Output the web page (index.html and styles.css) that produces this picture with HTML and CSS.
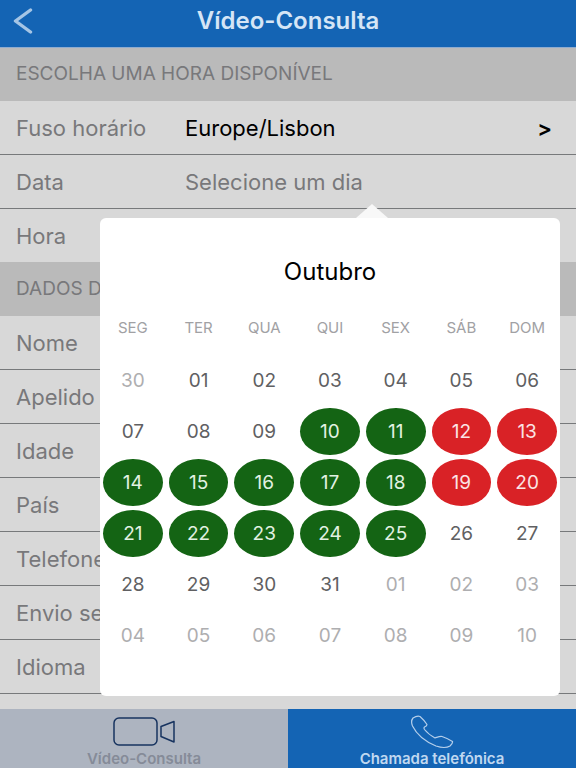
FILE: index.html
```html
<!DOCTYPE html>
<html lang="pt">

<head>
    <meta charset="UTF-8">
    <meta name="viewport" content="width=device-width, initial-scale=1.0">
    <title>Vídeo-Consulta</title>
    <link rel="stylesheet" href="styles.css">
</head>

<body>
    <header class="topbar">
        <button type="button" class="back" aria-label="Voltar">
            <svg width="20" height="26" viewBox="0 0 20 26" fill="none" stroke="currentColor" stroke-width="3.400" stroke-linecap="round" stroke-linejoin="round">
                <path d="M17.500 2L2.500 13L17.500 24" />
            </svg>
        </button>
        <h1>Vídeo-Consulta</h1>
    </header>

    <main>
        <form class="booking">
            <h2 class="section-title">ESCOLHA UMA HORA DISPONÍVEL</h2>
            <div class="row">
                <label for="timezone">Fuso horário</label>
                <button type="button" id="timezone" class="picker"><span>Europe/Lisbon</span><span class="arrow">&gt;</span></button>
            </div>
            <div class="row">
                <label for="date">Data</label>
                <input type="text" id="date" placeholder="Selecione um dia" readonly>
            </div>
            <div class="row">
                <label for="time">Hora</label>
                <input type="text" id="time" readonly>
            </div>

            <h2 class="section-title">DADOS DO PACIENTE</h2>
            <div class="row">
                <label for="name">Nome</label>
                <input type="text" id="name">
            </div>
            <div class="row">
                <label for="surname">Apelido</label>
                <input type="text" id="surname">
            </div>
            <div class="row">
                <label for="age">Idade</label>
                <input type="text" id="age">
            </div>
            <div class="row">
                <label for="country">País</label>
                <input type="text" id="country">
            </div>
            <div class="row">
                <label for="phone">Telefone</label>
                <input type="tel" id="phone">
            </div>
            <div class="row">
                <label for="secure">Envio seguro</label>
                <input type="text" id="secure">
            </div>
            <div class="row">
                <label for="language">Idioma</label>
                <input type="text" id="language">
            </div>
        </form>

        <!-- Date popover -->
        <section class="calendar" aria-label="Calendário">
            <h2>Outubro</h2>
            <table>
                <thead>
                    <tr><th>SEG</th><th>TER</th><th>QUA</th><th>QUI</th><th>SEX</th><th>SÁB</th><th>DOM</th></tr>
                </thead>
                <tbody>
                    <tr>
                        <td><button type="button" class="day other">30</button></td>
                        <td><button type="button" class="day">01</button></td>
                        <td><button type="button" class="day">02</button></td>
                        <td><button type="button" class="day">03</button></td>
                        <td><button type="button" class="day">04</button></td>
                        <td><button type="button" class="day">05</button></td>
                        <td><button type="button" class="day">06</button></td>
                    </tr>
                    <tr>
                        <td><button type="button" class="day">07</button></td>
                        <td><button type="button" class="day">08</button></td>
                        <td><button type="button" class="day">09</button></td>
                        <td><button type="button" class="day free">10</button></td>
                        <td><button type="button" class="day free">11</button></td>
                        <td><button type="button" class="day busy">12</button></td>
                        <td><button type="button" class="day busy">13</button></td>
                    </tr>
                    <tr>
                        <td><button type="button" class="day free">14</button></td>
                        <td><button type="button" class="day free">15</button></td>
                        <td><button type="button" class="day free">16</button></td>
                        <td><button type="button" class="day free">17</button></td>
                        <td><button type="button" class="day free">18</button></td>
                        <td><button type="button" class="day busy">19</button></td>
                        <td><button type="button" class="day busy">20</button></td>
                    </tr>
                    <tr>
                        <td><button type="button" class="day free">21</button></td>
                        <td><button type="button" class="day free">22</button></td>
                        <td><button type="button" class="day free">23</button></td>
                        <td><button type="button" class="day free">24</button></td>
                        <td><button type="button" class="day free">25</button></td>
                        <td><button type="button" class="day">26</button></td>
                        <td><button type="button" class="day">27</button></td>
                    </tr>
                    <tr>
                        <td><button type="button" class="day">28</button></td>
                        <td><button type="button" class="day">29</button></td>
                        <td><button type="button" class="day">30</button></td>
                        <td><button type="button" class="day">31</button></td>
                        <td><button type="button" class="day other">01</button></td>
                        <td><button type="button" class="day other">02</button></td>
                        <td><button type="button" class="day other">03</button></td>
                    </tr>
                    <tr>
                        <td><button type="button" class="day other">04</button></td>
                        <td><button type="button" class="day other">05</button></td>
                        <td><button type="button" class="day other">06</button></td>
                        <td><button type="button" class="day other">07</button></td>
                        <td><button type="button" class="day other">08</button></td>
                        <td><button type="button" class="day other">09</button></td>
                        <td><button type="button" class="day other">10</button></td>
                    </tr>
                </tbody>
            </table>
        </section>
    </main>

    <nav class="tabs">
        <button type="button" class="tab">
            <svg width="64" height="34" viewBox="0 0 64 34" fill="none" stroke="#17335f" stroke-width="1.500" stroke-linejoin="round">
                <rect x="2" y="3" width="43" height="27" rx="5" />
                <path d="M49 11.500L62 6.500V27L49 21.500Z" />
            </svg>
            <span>Vídeo-Consulta</span>
        </button>
        <button type="button" class="tab active">
            <svg width="44" height="34" viewBox="0 0 44 34" fill="none" stroke="#b5cfeb" stroke-width="1.200" stroke-linejoin="round">
                <path d="M3 3Q7 .5 10 1.500Q14 5 17 9.500Q17 11 14.500 12Q13.500 13 14.500 14.500Q18 19 25 23C28 22 30 21 32 21.500Q38 23.500 42.500 26.500Q43 28 40 31Q35 34 26 31Q9 24 2.500 11Q.5 6 3 3Z" />
            </svg>
            <span>Chamada telefónica</span>
        </button>
    </nav>
</body>

</html>
```
FILE: styles.css
```css
/* General Reset */
* {
    margin: 0;
    padding: 0;
    box-sizing: border-box;
}

body {
    display: flex;
    flex-direction: column;
    min-height: 100vh;
    font-family: Inter, "Liberation Sans", sans-serif;
    font-size: 22px;
    line-height: 24px;
    color: #78787b;
    background-color: #d8d8d8;
}

button, input {
    font: inherit;
    color: inherit;
    background: none;
    border: none;
}

button {
    cursor: pointer;
}

/* Top bar */
.topbar {
    display: grid;
    grid-template-columns: 48px 1fr 48px;
    align-items: center;
    height: 48px;
    padding-bottom: 5px;
    color: #d5e5f6;
    background: #1464b4;
    border-bottom: 1px solid #8facd0;
}

.topbar h1 {
    font-size: 24px;
    font-weight: 600;
    text-align: center;
}

.back {
    display: flex;
    padding-left: 13px;
    color: #a5c5e5;
}

/* Form */
main {
    position: relative;
    flex: 1;
    padding-bottom: 15px;
}

.section-title {
    padding: 14px 16px 15px;
    font-size: 19px;
    font-weight: 400;
    background: #bababa;
}

.row {
    display: grid;
    grid-template-columns: 153px 1fr;
    column-gap: 16px;
    align-items: center;
    height: 54px;
    padding: 0 24px 0 16px;
    border-bottom: 1px solid #77797b;
}

.row:has(+ .section-title) {
    border-bottom-color: #bababa;
}

.row label {
    white-space: nowrap;
}

.row input {
    width: 100%;
    outline: none;
}

.row input::placeholder {
    color: #78787b;
    opacity: 1;
}

.picker {
    display: flex;
    justify-content: space-between;
    color: #000;
}

.arrow {
    font-weight: 600;
}

/* Calendar popover */
.calendar {
    position: absolute;
    top: 170px;
    left: 100px;
    right: 16px;
    padding: 42px 0 35px;
    background: #fff;
    border-radius: 6px;
}

.calendar::before {
    content: "";
    position: absolute;
    top: -14px;
    left: 256px;
    border: 16px solid transparent;
    border-top: none;
    border-bottom: 14px solid #f8f8f8;
}

.calendar h2 {
    font-size: 24px;
    font-weight: 400;
    color: #000;
    text-align: center;
}

.calendar table {
    width: 100%;
    margin-top: 25px;
    table-layout: fixed;
    border-collapse: collapse;
}

.calendar th {
    height: 46px;
    padding-bottom: 8px;
    font-size: 15px;
    font-weight: 400;
    color: #a1a1a4;
}

.calendar td {
    height: 51px;
    padding: 2px 3px;
}

.day {
    display: block;
    width: 100%;
    height: 47px;
    font-size: 19px;
    color: #606062;
    border-radius: 50%;
}

.day.other {
    color: #aeaeb0;
}

.day.free {
    color: #e2f2e2;
    background: #146414;
}

.day.busy {
    color: #fbe4e4;
    background: #d92226;
}

/* Bottom tabs */
.tabs {
    display: grid;
    grid-template-columns: 1fr 1fr;
}

.tab {
    display: flex;
    flex-direction: column;
    align-items: center;
    padding-top: 6px;
    font-size: 15px;
    font-weight: 600;
    line-height: 19px;
    color: #858b98;
    background: #adb4c0;
}

.tab.active {
    color: #c0d8f0;
    background: #1464b4;
}
```
